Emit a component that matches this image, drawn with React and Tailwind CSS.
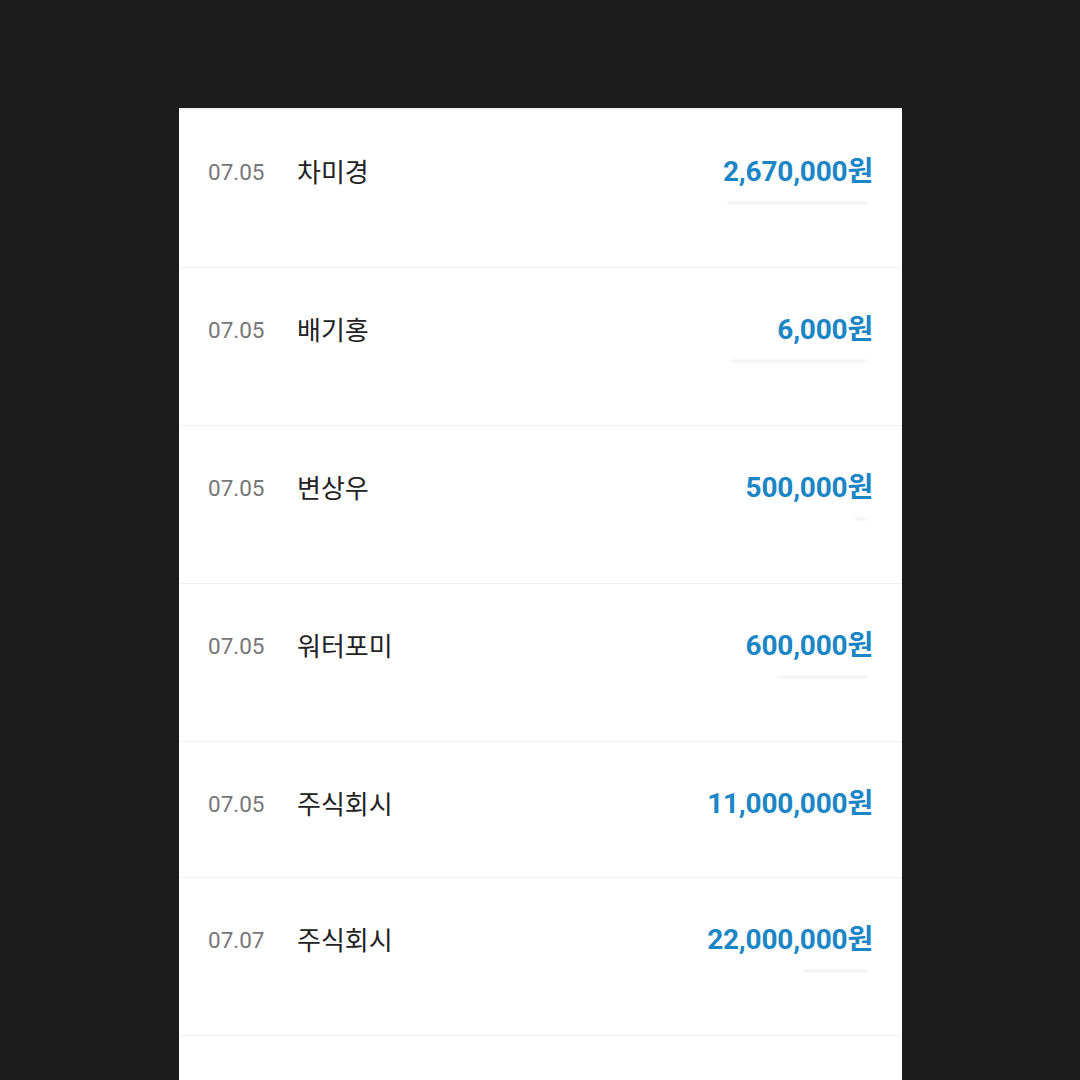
const rows = [
  { date: '07.05', name: '차미경', amount: '2,670,000', smudge: 'w-[140px]', tall: true },
  { date: '07.05', name: '배기홍', amount: '6,000', smudge: 'w-[136px]', tall: true },
  { date: '07.05', name: '변상우', amount: '500,000', smudge: 'w-[12px]', tall: true },
  { date: '07.05', name: '워터포미', amount: '600,000', smudge: 'w-[90px]', tall: true },
  { date: '07.05', name: '주식회시', amount: '11,000,000', smudge: null, tall: false },
  { date: '07.07', name: '주식회시', amount: '22,000,000', smudge: 'w-[64px]', tall: true },
];

function Row({ row }) {
  return (
    <div className={`flex flex-col border-b border-[#f0f0f0] pl-[29px] pr-[29px] pt-[46px] ${row.tall ? 'h-[158px]' : 'h-[136px]'}`}>
      <div className="flex items-center h-[32px]">
        <span className="w-[89px] pt-[2px] text-[22.5px] text-[#777777] font-['Roboto',sans-serif]">{row.date}</span>
        <span className="flex-1 pb-[4px] text-[26px] text-[#222222] font-['Noto_Sans_CJK_KR',sans-serif]">{row.name}</span>
        <span className="text-[28px] font-bold text-[#1b86c6] font-['Roboto','Noto_Sans_CJK_KR',sans-serif] tracking-[-0.2px]">
          {row.amount}원
        </span>
      </div>
      {row.smudge && (
        <div className="flex justify-end mt-[14px] pr-[6px]">
          <div className={`h-[2px] rounded-full bg-[#eeeeee] blur-[1px] ${row.smudge}`} />
        </div>
      )}
    </div>
  );
}

export default function App() {
  return (
    <div className="h-[1080px] overflow-hidden bg-[#1c1c1c] pl-[179px] pt-[108px]">
      <div className="w-[723px] min-h-[972px] bg-white border-t-2 border-[#f2f2f2]">
        {rows.map((row, i) => (
          <Row key={i} row={row} />
        ))}
      </div>
    </div>
  );
}
